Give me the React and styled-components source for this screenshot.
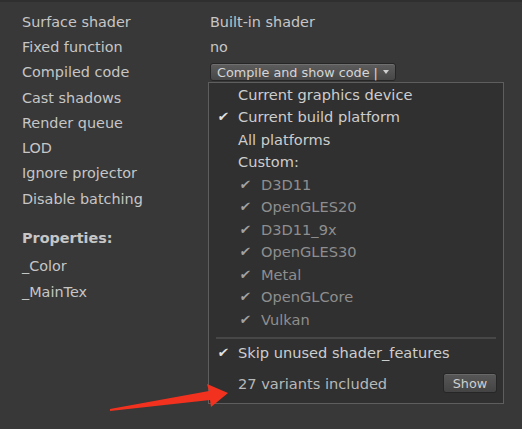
import React from 'react'
import styled, { createGlobalStyle } from 'styled-components'

const Global = createGlobalStyle`
  html, body { margin: 0; padding: 0; background: #383838; }
  body { font-family: "DejaVu Sans", "Noto Sans", sans-serif; }
`

const Page = styled.div`
  position: relative;
  width: 522px;
  height: 429px;
  box-sizing: border-box;
  background: #383838;
  border-top: 2px solid #2f2f2f;
  padding: 7px 0 0 22px;
  color: #c6c6c6;
  font-size: 14.4px;
  overflow: hidden;
`

const Table = styled.div`
  display: grid;
  grid-template-columns: 188px 1fr;
  grid-auto-rows: 25.3px;
  align-items: center;
`

const Label = styled.div`
  white-space: nowrap;
`

const Value = styled.div`
  position: relative;
  white-space: nowrap;
`

const Heading = styled.div`
  margin-top: 15px;
  height: 28px;
  line-height: 25px;
  font-weight: bold;
`

const PropRow = styled.div`
  height: 25.3px;
  line-height: 25.3px;
`

const DropButton = styled.div`
  display: inline-flex;
  align-items: center;
  gap: 5px;
  height: 18px;
  box-sizing: border-box;
  padding: 0 6px;
  font-size: 12.8px;
  color: #d6d6d6;
  background: linear-gradient(#5d5d5d, #474747);
  border: 1px solid #262626;
  border-radius: 3px;
  box-shadow: inset 0 1px 0 rgba(255,255,255,0.12);
`

const Caret = styled.span`
  width: 0;
  height: 0;
  border-left: 3px solid transparent;
  border-right: 3px solid transparent;
  border-top: 4px solid #cfcfcf;
`

const Menu = styled.div`
  position: absolute;
  top: 19px;
  left: -2px;
  width: 296px;
  height: 322px;
  box-sizing: border-box;
  background: #303030;
  border: 1px solid #5e5e5e;
  font-size: 14.6px;
`

const Item = styled.div`
  display: flex;
  align-items: center;
  height: 22.5px;
  padding-left: ${p => (p.sub ? 31 : 9)}px;
  color: ${p => (p.sub ? '#8e8e8e' : '#cdcdcd')};
`

const Check = styled.span`
  display: inline-block;
  width: ${p => (p.sub ? 21 : 20)}px;
  font-size: 13px;
  transform: skewX(-8deg);
  color: ${p => (p.sub ? '#a2a2a2' : '#e2e2e2')};
`

const Separator = styled.div`
  margin: 6px 7px 3px 7px;
  height: 2px;
  background: #474747;
`

const Footer = styled.div`
  display: flex;
  align-items: center;
  justify-content: space-between;
  height: 28px;
  margin-top: 5px;
  padding: 0 6px 0 29px;
  color: #b8b8b8;
`

const SmallButton = styled.div`
  width: 54px;
  height: 20px;
  box-sizing: border-box;
  display: flex;
  align-items: center;
  justify-content: center;
  font-size: 12.8px;
  color: #cfcfcf;
  background: linear-gradient(#575757, #444444);
  border: 1px solid #262626;
  border-radius: 3px;
  box-shadow: inset 0 1px 0 rgba(255,255,255,0.1);
`

const Arrow = styled.svg`
  position: absolute;
  left: 0;
  top: 0;
  pointer-events: none;
`

const rows = [
  ['Surface shader', 'Built-in shader'],
  ['Fixed function', 'no'],
  ['Compiled code', null],
  ['Cast shadows', ''],
  ['Render queue', ''],
  ['LOD', ''],
  ['Ignore projector', ''],
  ['Disable batching', ''],
]

const topItems = [
  ['Current graphics device', false],
  ['Current build platform', true],
  ['All platforms', false],
  ['Custom:', false],
]

const platforms = ['D3D11', 'OpenGLES20', 'D3D11_9x', 'OpenGLES30', 'Metal', 'OpenGLCore', 'Vulkan']

const CompileMenu = () => (
  <Menu>
    {topItems.map(([text, on]) => (
      <Item key={text}>
        <Check>{on ? '✔' : ''}</Check>
        {text}
      </Item>
    ))}
    {platforms.map(p => (
      <Item sub key={p}>
        <Check sub>✔</Check>
        {p}
      </Item>
    ))}
    <Separator />
    <Item>
      <Check>✔</Check>
      Skip unused shader_features
    </Item>
    <Footer>
      <span>27 variants included</span>
      <SmallButton>Show</SmallButton>
    </Footer>
  </Menu>
)

export default function App() {
  return (
    <Page>
      <Global />
      <Table>
        {rows.map(([label, value]) => (
          <React.Fragment key={label}>
            <Label>{label}</Label>
            <Value>
              {value === null ? (
                <>
                  <DropButton>
                    Compile and show code | <Caret />
                  </DropButton>
                  <CompileMenu />
                </>
              ) : (
                value
              )}
            </Value>
          </React.Fragment>
        ))}
      </Table>
      <Heading>Properties:</Heading>
      <PropRow>_Color</PropRow>
      <PropRow>_MainTex</PropRow>
      <Arrow width="522" height="429" viewBox="0 0 522 429">
        <polygon
          points="110,407 209,389 207,382 228,391 211,405 210,398 110,409"
          fill="#f2321f"
        />
      </Arrow>
    </Page>
  )
}
